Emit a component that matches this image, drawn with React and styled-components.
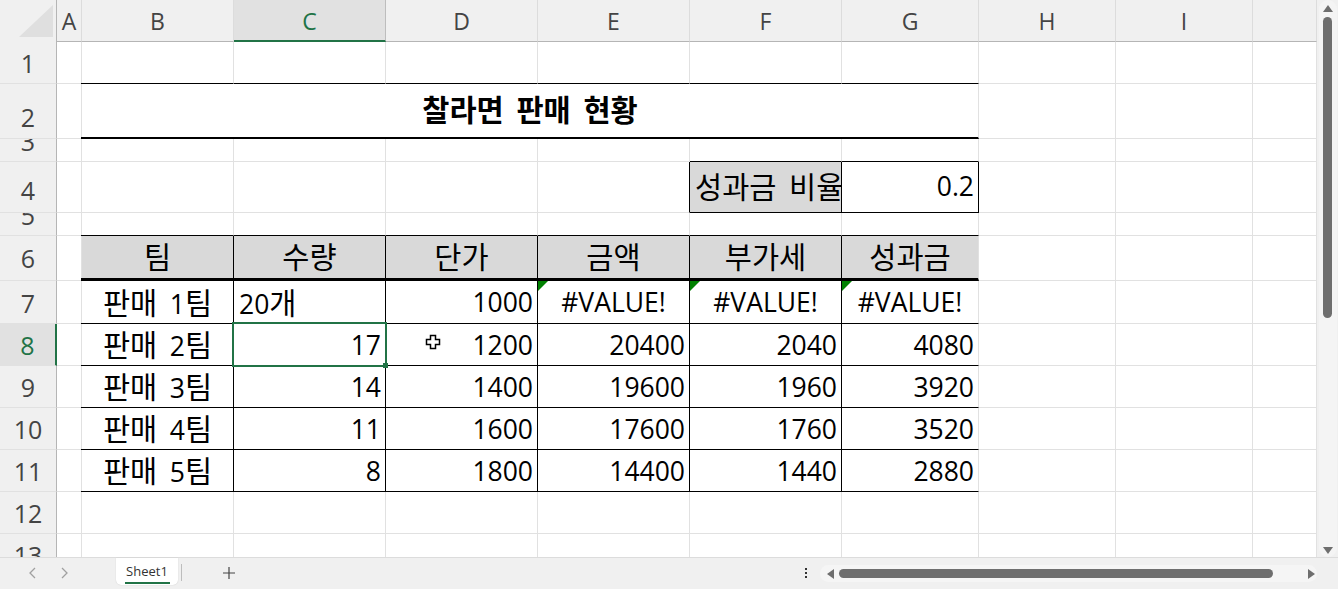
import styled, { createGlobalStyle } from "styled-components";

const GlobalStyle = createGlobalStyle`
  html, body {
    margin: 0;
    padding: 0;
    width: 100%;
    height: 100%;
    overflow: hidden;
    background: #f0f0f0;
  }
`;

const KOREAN = `"Noto Sans CJK KR", "Noto Sans", sans-serif`;
const LATIN = `"Open Sans", "Noto Sans", sans-serif`;
const GREEN = "#217346";

const Window = styled.div`
  width: 1338px;
  height: 589px;
  display: flex;
  flex-direction: column;
  overflow: hidden;
`;

const Body = styled.div`
  display: flex;
  height: 557px;
`;

const Sheet = styled.div`
  width: 1317px;
  display: grid;
  grid-template-columns: 57px 25px repeat(5, 152px) 137px 137px 137px 64px;
  grid-template-rows: 42px 42px 55px 23px 51px 23px 45px 43px 42px 42px 42px 42px 42px 42px;
  overflow: hidden;
  background: #fff;
`;

const Corner = styled.div`
  background: #f0f0f0;
  position: relative;
  box-sizing: border-box;
  border-right: 1px solid #b5b5b5;
  svg {
    display: block;
  }
`;

const ColHead = styled.div`
  box-sizing: border-box;
  display: flex;
  align-items: center;
  justify-content: center;
  font-family: ${LATIN};
  font-size: 23px;
  padding-top: 1px;
  color: ${(p) => (p.$active ? GREEN : "#444")};
  background: ${(p) => (p.$active ? "#e1e1e1" : "#f0f0f0")};
  border-right: 1px solid ${(p) => (p.$active ? "#bdbdbd" : "#dcdcdc")};
  border-bottom: ${(p) => (p.$active ? `2px solid ${GREEN}` : "1px solid #b5b5b5")};
`;

const RowHead = styled.div`
  box-sizing: border-box;
  display: flex;
  align-items: flex-end;
  justify-content: center;
  overflow: hidden;
  font-family: ${LATIN};
  font-size: 25px;
  line-height: 40px;
  height: 100%;
  min-height: 0;
  padding-bottom: ${(p) => p.$lift || 0}px;
  color: ${(p) => (p.$active ? GREEN : "#444")};
  background: ${(p) => (p.$active ? "#e1e1e1" : "#f0f0f0")};
  border-right: ${(p) => (p.$active ? `2px solid ${GREEN}` : "1px solid #b5b5b5")};
  border-bottom: 1px solid #e1e1e1;
`;

const Cell = styled.div`
  box-sizing: border-box;
  position: relative;
  min-width: 0;
  min-height: 0;
  display: flex;
  align-items: center;
  justify-content: ${(p) => p.$align || "center"};
  padding: 0 ${(p) => (p.$align === "flex-end" ? "4px" : "0")} 0 ${(p) => (p.$align === "flex-start" ? "5px" : "0")};
  grid-column: ${(p) => (p.$span ? `span ${p.$span}` : "auto")};
  white-space: pre;
  font-family: ${LATIN};
  font-size: 26.5px;
  line-height: 36px;
  font-weight: ${(p) => (p.$bold ? 700 : 400)};
  color: #000;
  background: ${(p) => (p.$shade ? "#d9d9d9" : "#fff")};
  border-right: 1px solid ${(p) => (p.$right ? "#000" : "#e1e1e1")};
  border-bottom: ${(p) => p.$bottom || 1}px solid ${(p) => (p.$bottom ? "#000" : "#e1e1e1")};

  /* black rules start one pixel left of column B, over the gridline */
  &::after {
    content: "";
    display: ${(p) => (p.$lead ? "block" : "none")};
    position: absolute;
    left: -1px;
    bottom: -${(p) => p.$bottom || 1}px;
    width: 1px;
    height: ${(p) => p.$bottom || 1}px;
    background: #000;
  }
`;

const Value = styled.span`
  display: block;
  margin-top: ${(p) => (p.$low ? 0 : -2)}px;
`;

const Hangul = styled.span`
  font-family: ${KOREAN};
  font-size: 29.5px;
  line-height: 36px;
  word-spacing: 6px;
`;

const ErrorMark = styled.span`
  position: absolute;
  left: 0;
  top: 0;
  width: 0;
  height: 0;
  border-top: 10px solid #008000;
  border-right: 10px solid transparent;
`;

const Selection = styled.span`
  position: absolute;
  left: -2px;
  top: -2px;
  right: -2px;
  bottom: -2px;
  z-index: 2;
  border: 2px solid ${GREEN};
  pointer-events: none;
`;

const Handle = styled.span`
  position: absolute;
  right: -3px;
  bottom: -3px;
  width: 5px;
  height: 5px;
  background: ${GREEN};
`;

const Pointer = styled.svg`
  position: absolute;
  left: 39px;
  top: 10px;
`;

const VScroll = styled.div`
  width: 21px;
  display: flex;
  flex-direction: column;
  align-items: center;
  background: #f0f0f0;
`;

const VTrack = styled.div`
  width: 18px;
  height: 100%;
  display: flex;
  flex-direction: column;
  align-items: center;
  justify-content: space-between;
  background: #f4f4f4;
  border-radius: 9px;
  padding: 4px 0 2px;
  box-sizing: border-box;
`;

const VGroup = styled.div`
  display: flex;
  flex-direction: column;
  align-items: center;
  gap: 4px;
`;

const VThumb = styled.div`
  width: 9px;
  height: 301px;
  border-radius: 5px;
  background: #6e6e6e;
`;

const Footer = styled.div`
  height: 32px;
  display: flex;
  align-items: flex-start;
  background: #f0f0f0;
  border-top: 1px solid #dcdcdc;
  box-sizing: border-box;
`;

const NavArrows = styled.div`
  width: 116px;
  height: 30px;
  display: flex;
  align-items: center;
  gap: 23px;
  padding-left: 28px;
  box-sizing: border-box;
`;

const Tab = styled.div`
  width: 62px;
  height: 27px;
  box-sizing: border-box;
  background: #fff;
  border-radius: 0 0 5px 5px;
  box-shadow: 0 0 1px #bbb;
  display: flex;
  flex-direction: column;
  align-items: center;
  font-family: ${LATIN};
  font-size: 13px;
  line-height: 22px;
  padding-top: 2px;
  color: #333;
`;

const TabLine = styled.span`
  width: 45px;
  height: 2px;
  background: ${GREEN};
  flex: none;
`;

const Divider = styled.span`
  width: 1px;
  height: 17px;
  margin: 6px 0 0 3px;
  background: #bdbdbd;
`;

const AddSheet = styled.div`
  width: 94px;
  height: 30px;
  display: flex;
  align-items: center;
  justify-content: center;
`;

const Spacer = styled.div`
  flex: 1;
`;

const Dots = styled.div`
  width: 16px;
  height: 30px;
  margin-right: 6px;
  display: flex;
  flex-direction: column;
  align-items: center;
  justify-content: center;
  gap: 2px;
  span {
    width: 2px;
    height: 2px;
    background: #333;
  }
`;

const HTrack = styled.div`
  width: 497px;
  height: 17px;
  margin: 7px 21px 0 0;
  display: flex;
  align-items: center;
  background: #f5f5f5;
  border-radius: 9px;
  padding: 0 1px 0 6px;
  box-sizing: border-box;
`;

const HThumb = styled.div`
  width: 434px;
  height: 9px;
  margin-left: 4px;
  border-radius: 5px;
  background: #6e6e6e;
`;

const HEnd = styled.div`
  flex: 1;
  display: flex;
  justify-content: flex-end;
`;

const Triangle = ({ dir }) => {
  const points = {
    up: "0,8 5,1 10,8",
    down: "0,1 10,1 5,8",
    left: "8,0 8,10 1,5",
    right: "1,0 8,5 1,10",
  }[dir];
  const wide = dir === "up" || dir === "down";
  return (
    <svg width={wide ? 10 : 9} height={wide ? 9 : 10} viewBox={wide ? "0 0 10 9" : "0 0 9 10"}>
      <polygon points={points} fill="#6e6e6e" />
    </svg>
  );
};

const Chevron = ({ flip }) => (
  <svg width="9" height="12" viewBox="0 0 9 12" fill="none" stroke="#a0a0a0" strokeWidth="1.3">
    <path d={flip ? "M2 1l5 5-5 5" : "M7 1L2 6l5 5"} />
  </svg>
);

// hangul runs get their own size, the latin font in the reference is smaller
const Mixed = ({ text, low }) => (
  <Value $low={low}>
    {String(text)
      .split(/([가-힣 ]+)/)
      .filter(Boolean)
      .map((part, i) => (/[가-힣]/.test(part) ? <Hangul key={i}>{part}</Hangul> : part))}
  </Value>
);

const COLS = ["A", "B", "C", "D", "E", "F", "G", "H", "I", ""];
const TABLE = ["B", "C", "D", "E", "F", "G"];
const ROWS = [1, 2, 3, 4, 5, 6, 7, 8, 9, 10, 11, 12, 13];
const LABEL_LIFT = { 2: 1, 4: 2, 6: 2 };

const CONTENT = {
  F4: { text: "성과금 비율", shade: true, align: "flex-start" },
  G4: { text: "0.2", align: "flex-end" },
  B6: { text: "팀", shade: true },
  C6: { text: "수량", shade: true },
  D6: { text: "단가", shade: true },
  E6: { text: "금액", shade: true },
  F6: { text: "부가세", shade: true },
  G6: { text: "성과금", shade: true },
  B7: { text: "판매 1팀" },
  C7: { text: "20개", align: "flex-start" },
  D7: { text: "1000", align: "flex-end" },
  E7: { text: "#VALUE!", error: true },
  F7: { text: "#VALUE!", error: true },
  G7: { text: "#VALUE!", error: true },
};

const numbers = {
  8: ["판매 2팀", 17, 1200, 20400, 2040, 4080],
  9: ["판매 3팀", 14, 1400, 19600, 1960, 3920],
  10: ["판매 4팀", 11, 1600, 17600, 1760, 3520],
  11: ["판매 5팀", 8, 1800, 14400, 1440, 2880],
};

Object.entries(numbers).forEach(([row, values]) => {
  values.forEach((value, i) => {
    CONTENT[TABLE[i] + row] = i === 0 ? { text: value } : { text: value, align: "flex-end" };
  });
});

const inTable = (col) => TABLE.includes(col);

const bottomOf = (col, row) => {
  if (!inTable(col)) return 0;
  if (row === 6) return 3;
  if (row === 1 || row === 5 || (row >= 7 && row <= 11)) return 1;
  if ((row === 3 || row === 4) && (col === "F" || col === "G")) return 1;
  return 0;
};

const hasRight = (col, row) => {
  if (row >= 6 && row <= 11) return inTable(col) && col !== "G";
  if (row === 4) return col === "E" || col === "F" || col === "G";
  return false;
};

const App = () => {
  return (
    <Window>
      <GlobalStyle />
      <Body>
        <Sheet>
          <Corner>
            <svg width="56" height="41" viewBox="0 0 56 41">
              <polygon points="19,37 53,5 53,37" fill="#dfdfdf" />
            </svg>
          </Corner>
          {COLS.map((col, i) => (
            <ColHead key={i} $active={col === "C"}>
              {col}
            </ColHead>
          ))}
          {ROWS.map((row) => [
            <RowHead key={row} $active={row === 8} $lift={LABEL_LIFT[row]}>
              {row}
            </RowHead>,
            ...COLS.map((col, i) => {
              const key = `${col}${row}`;
              if (row === 2 && inTable(col)) {
                if (col !== "B") return null;
                return (
                  <Cell key={key} $span={6} $bold $bottom={2} $lead>
                    <Mixed text="찰라면 판매 현황" />
                  </Cell>
                );
              }
              const cell = CONTENT[key] || {};
              const bottom = bottomOf(col, row);
              return (
                <Cell
                  key={key || i}
                  $align={cell.align}
                  $shade={cell.shade}
                  $right={hasRight(col, row)}
                  $bottom={bottom}
                  $lead={col === "B" && bottom > 0}
                >
                  {cell.error && <ErrorMark />}
                  {cell.text !== undefined && <Mixed text={cell.text} low={row >= 7} />}
                  {key === "C8" && (
                    <Selection>
                      <Handle />
                    </Selection>
                  )}
                  {key === "D8" && (
                    <Pointer width="16" height="16" viewBox="0 0 16 16">
                      <path
                        d="M5.5 1.5h5v4h4v5h-4v4h-5v-4h-4v-5h4z"
                        fill="#fff"
                        stroke="#000"
                        strokeWidth="1.5"
                      />
                    </Pointer>
                  )}
                </Cell>
              );
            }),
          ])}
        </Sheet>
        <VScroll>
          <VTrack>
            <VGroup>
              <Triangle dir="up" />
              <VThumb />
            </VGroup>
            <Triangle dir="down" />
          </VTrack>
        </VScroll>
      </Body>
      <Footer>
        <NavArrows>
          <Chevron />
          <Chevron flip />
        </NavArrows>
        <Tab>
          Sheet1
          <TabLine />
        </Tab>
        <Divider />
        <AddSheet>
          <svg width="12" height="12" viewBox="0 0 12 12" stroke="#444" strokeWidth="1.2">
            <path d="M6 0v12M0 6h12" />
          </svg>
        </AddSheet>
        <Spacer />
        <Dots>
          <span />
          <span />
          <span />
        </Dots>
        <HTrack>
          <Triangle dir="left" />
          <HThumb />
          <HEnd>
            <Triangle dir="right" />
          </HEnd>
        </HTrack>
      </Footer>
    </Window>
  );
};

export default App;
